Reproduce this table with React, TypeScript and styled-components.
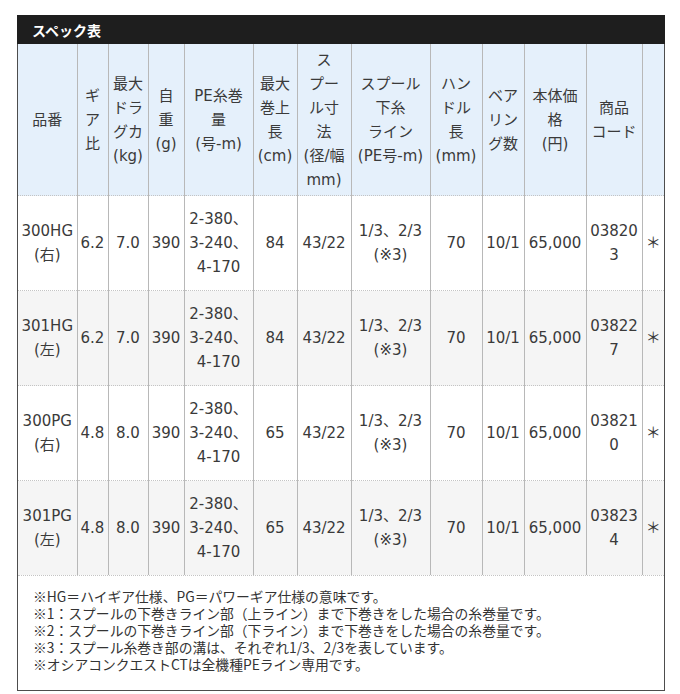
import React from 'react'
import styled, { createGlobalStyle } from 'styled-components'

const GlobalStyle = createGlobalStyle`
  html, body {
    margin: 0;
    padding: 0;
    background: #ffffff;
  }
  body {
    font-family: 'DejaVu Sans', 'Noto Sans CJK JP', sans-serif;
    color: #333333;
  }
`

const Page = styled.div`
  padding: 15px 0 0 17px;
`

const Sheet = styled.div`
  width: 648px;
  box-sizing: border-box;
  border: 1px solid #4d4d4d;
  border-top: none;
`

const TitleBar = styled.div`
  display: flex;
  align-items: center;
  height: 29px;
  padding-left: 15px;
  background: #1e1e1e;
  color: #ffffff;
  font-family: 'Noto Sans CJK JP', sans-serif;
  font-size: 14px;
  font-weight: 700;
  margin: 0 -1px;
`

const SpecTable = styled.table`
  width: 100%;
  border-collapse: collapse;
  table-layout: fixed;
  font-size: 15px;
  line-height: 24px;
`

const HeadCell = styled.th`
  background: #e5f0fb;
  font-weight: 400;
  color: #3a3a3a;
  padding: 3px 0;
  height: 145px;
  text-align: center;
  vertical-align: middle;
  white-space: nowrap;
  border-left: 1px solid #b8b8b8;
  &:first-child {
    border-left: none;
  }
`

const BodyRow = styled.tr<{ $shade: boolean }>`
  background: ${({ $shade }) => ($shade ? '#f5f5f5' : '#ffffff')};
  border-top: 1px dotted #c4c4c4;
`

const Cell = styled.td`
  padding: 11px 0;
  height: 72px;
  text-align: center;
  vertical-align: middle;
  white-space: nowrap;
  color: #3a3a3a;
  border-left: 1px solid #b8b8b8;
  &:first-child {
    border-left: none;
  }
`

const Notes = styled.div`
  border-top: 1px dotted #c4c4c4;
  padding: 12px 15px 17px;
  font-family: 'Noto Sans CJK JP', sans-serif;
  font-size: 13.8px;
  line-height: 17px;
  color: #333333;
`

const Lines = ({ items }: { items: string[] }) => (
  <>
    {items.map((t, i) => (
      <React.Fragment key={i}>
        {i > 0 && <br />}
        {t}
      </React.Fragment>
    ))}
  </>
)

const colWidths = [59, 31, 40, 36, 69, 44, 54, 79, 52, 42, 62, 56, 22]

const headers: string[][] = [
  ['品番'],
  ['ギ', 'ア', '比'],
  ['最大', 'ドラ', 'グカ', '(kg)'],
  ['自', '重', '(g)'],
  ['PE糸巻', '量', '(号-m)'],
  ['最大', '巻上', '長', '(cm)'],
  ['ス', 'プー', 'ル寸', '法', '(径/幅', 'mm)'],
  ['スプール', '下糸', 'ライン', '(PE号-m)'],
  ['ハン', 'ドル', '長', '(mm)'],
  ['ベア', 'リン', 'グ数'],
  ['本体価', '格', '(円)'],
  ['商品', 'コード'],
  [],
]

type Reel = {
  model: string
  side: string
  gear: string
  drag: string
  weight: string
  retrieve: string
  code: string
}

const reels: Reel[] = [
  { model: '300HG', side: '右', gear: '6.2', drag: '7.0', weight: '390', retrieve: '84', code: '038203' },
  { model: '301HG', side: '左', gear: '6.2', drag: '7.0', weight: '390', retrieve: '84', code: '038227' },
  { model: '300PG', side: '右', gear: '4.8', drag: '8.0', weight: '390', retrieve: '65', code: '038210' },
  { model: '301PG', side: '左', gear: '4.8', drag: '8.0', weight: '390', retrieve: '65', code: '038234' },
]

const notes = [
  '※HG＝ハイギア仕様、PG＝パワーギア仕様の意味です。',
  '※1：スプールの下巻きライン部（上ライン）まで下巻きをした場合の糸巻量です。',
  '※2：スプールの下巻きライン部（下ライン）まで下巻きをした場合の糸巻量です。',
  '※3：スプール糸巻き部の溝は、それぞれ1/3、2/3を表しています。',
  '※オシアコンクエストCTは全機種PEライン専用です。',
]

export default function App() {
  return (
    <>
      <GlobalStyle />
      <Page>
        <Sheet>
          <TitleBar>スペック表</TitleBar>
          <SpecTable>
            <colgroup>
              {colWidths.map((w, i) => (
                <col key={i} style={{ width: w }} />
              ))}
            </colgroup>
            <thead>
              <tr>
                {headers.map((h, i) => (
                  <HeadCell key={i}>
                    <Lines items={h} />
                  </HeadCell>
                ))}
              </tr>
            </thead>
            <tbody>
              {reels.map((r, i) => (
                <BodyRow key={r.model} $shade={i % 2 === 1}>
                  <Cell>
                    <Lines items={[r.model, `(${r.side})`]} />
                  </Cell>
                  <Cell>{r.gear}</Cell>
                  <Cell>{r.drag}</Cell>
                  <Cell>{r.weight}</Cell>
                  <Cell>
                    <Lines items={['2-380、', '3-240、', '4-170']} />
                  </Cell>
                  <Cell>{r.retrieve}</Cell>
                  <Cell>43/22</Cell>
                  <Cell>
                    <Lines items={['1/3、2/3', '(※3)']} />
                  </Cell>
                  <Cell>70</Cell>
                  <Cell>10/1</Cell>
                  <Cell>65,000</Cell>
                  <Cell>
                    <Lines items={[r.code.slice(0, 5), r.code.slice(5)]} />
                  </Cell>
                  <Cell>＊</Cell>
                </BodyRow>
              ))}
            </tbody>
          </SpecTable>
          <Notes>
            <Lines items={notes} />
          </Notes>
        </Sheet>
      </Page>
    </>
  )
}
